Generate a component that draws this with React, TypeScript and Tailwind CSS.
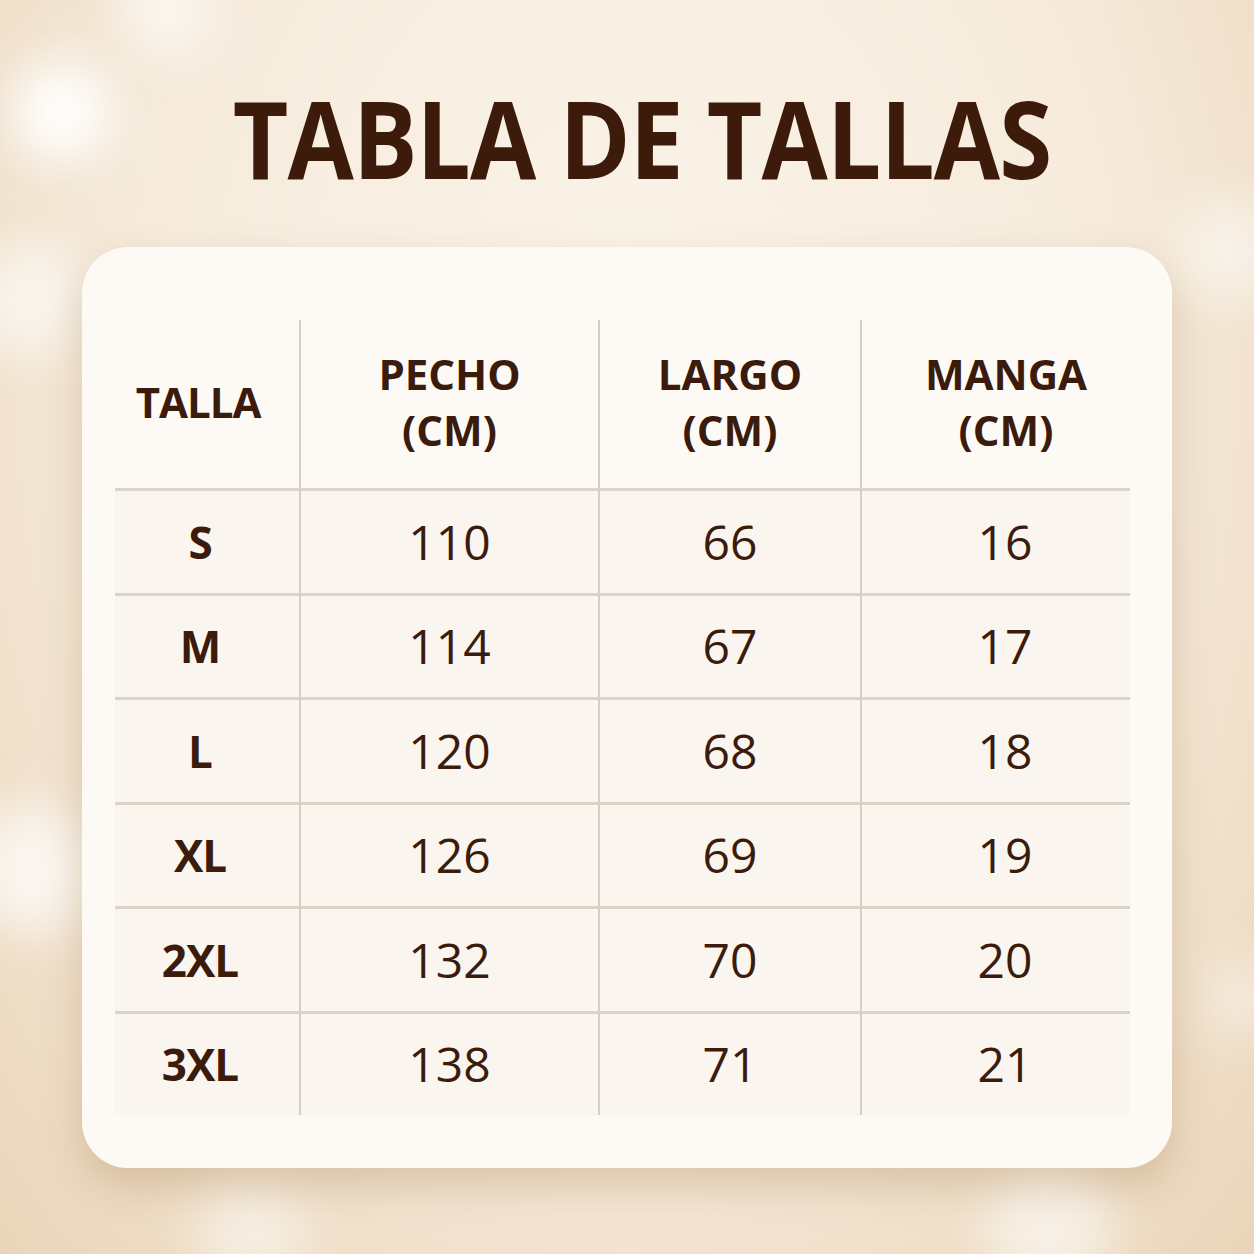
const HEADERS = ['TALLA', 'PECHO\n(CM)', 'LARGO\n(CM)', 'MANGA\n(CM)'];

const ROWS = [
  ['S', '110', '66', '16'],
  ['M', '114', '67', '17'],
  ['L', '120', '68', '18'],
  ['XL', '126', '69', '19'],
  ['2XL', '132', '70', '20'],
  ['3XL', '138', '71', '21'],
];

// soft light spots in the background
const BOKEH = [
  { x: 62, y: 112, s: 100, o: 0.95 },
  { x: 165, y: 12, s: 80, o: 0.7 },
  { x: 30, y: 300, s: 110, o: 0.6 },
  { x: 35, y: 870, s: 130, o: 0.7 },
  { x: 1230, y: 250, s: 100, o: 0.5 },
  { x: 1050, y: 1225, s: 130, o: 0.55 },
  { x: 1240, y: 1000, s: 80, o: 0.4 },
  { x: 250, y: 1230, s: 110, o: 0.45 },
];

export default function App() {
  return (
    <div
      className="relative w-[1254px] h-[1254px] overflow-hidden bg-[radial-gradient(ellipse_at_50%_30%,#fbf4ea_0%,#f6ebdc_55%,#ead5b9_100%)]"
      style={{ fontFamily: '"Open Sans", "Noto Sans", sans-serif' }}
    >
      {BOKEH.map((b, i) => (
        <div
          key={i}
          className="absolute rounded-full bg-white blur-xl"
          style={{ left: b.x - b.s / 2, top: b.y - b.s / 2, width: b.s, height: b.s, opacity: b.o }}
        />
      ))}

      <div className="relative flex flex-col items-center pt-[78px]">
        <h1 className="pl-[34px] text-[108px] leading-[120px] font-bold tracking-[-1px] scale-x-[0.89] text-[#3d1b0a]">
          TABLA DE TALLAS
        </h1>

        <div className="mt-[49px] w-[1090px] h-[921px] rounded-[46px] bg-[#fdfaf5] shadow-[0_18px_40px_rgba(150,110,60,0.28)] pl-[33px] pt-[73px]">
          <div className="grid grid-cols-[184px_299px_262px_270px] text-[#3a1b0c]">
            {HEADERS.map((h, i) => (
              <div
                key={h}
                className={`h-[168px] flex items-center justify-center text-center whitespace-pre-line font-bold text-[42px] leading-[56px] pb-[4px] ${
                  i > 0 ? 'border-l-2 border-[#d6cec2]' : 'pr-[18px] tracking-[-1px]'
                } ${i === 3 ? 'pl-[20px]' : ''}`}
              >
                {h}
              </div>
            ))}
            {ROWS.map((row, r) =>
              row.map((cell, c) => (
                <div
                  key={`${r}-${c}`}
                  className={`h-[104.5px] flex items-center justify-center border-t-[3px] border-t-[#dcd3c7] bg-[#faf5ee] ${
                    c > 0 ? 'border-l-2 border-l-[#d6cec2]' : ''
                  } ${c === 0 ? 'font-bold text-[44px] tracking-[-1px] pr-[14px]' : 'font-normal text-[48px]'} ${
                    c === 3 ? 'pl-[18px]' : ''
                  }`}
                >
                  {cell}
                </div>
              ))
            )}
          </div>
        </div>
      </div>
    </div>
  );
}
